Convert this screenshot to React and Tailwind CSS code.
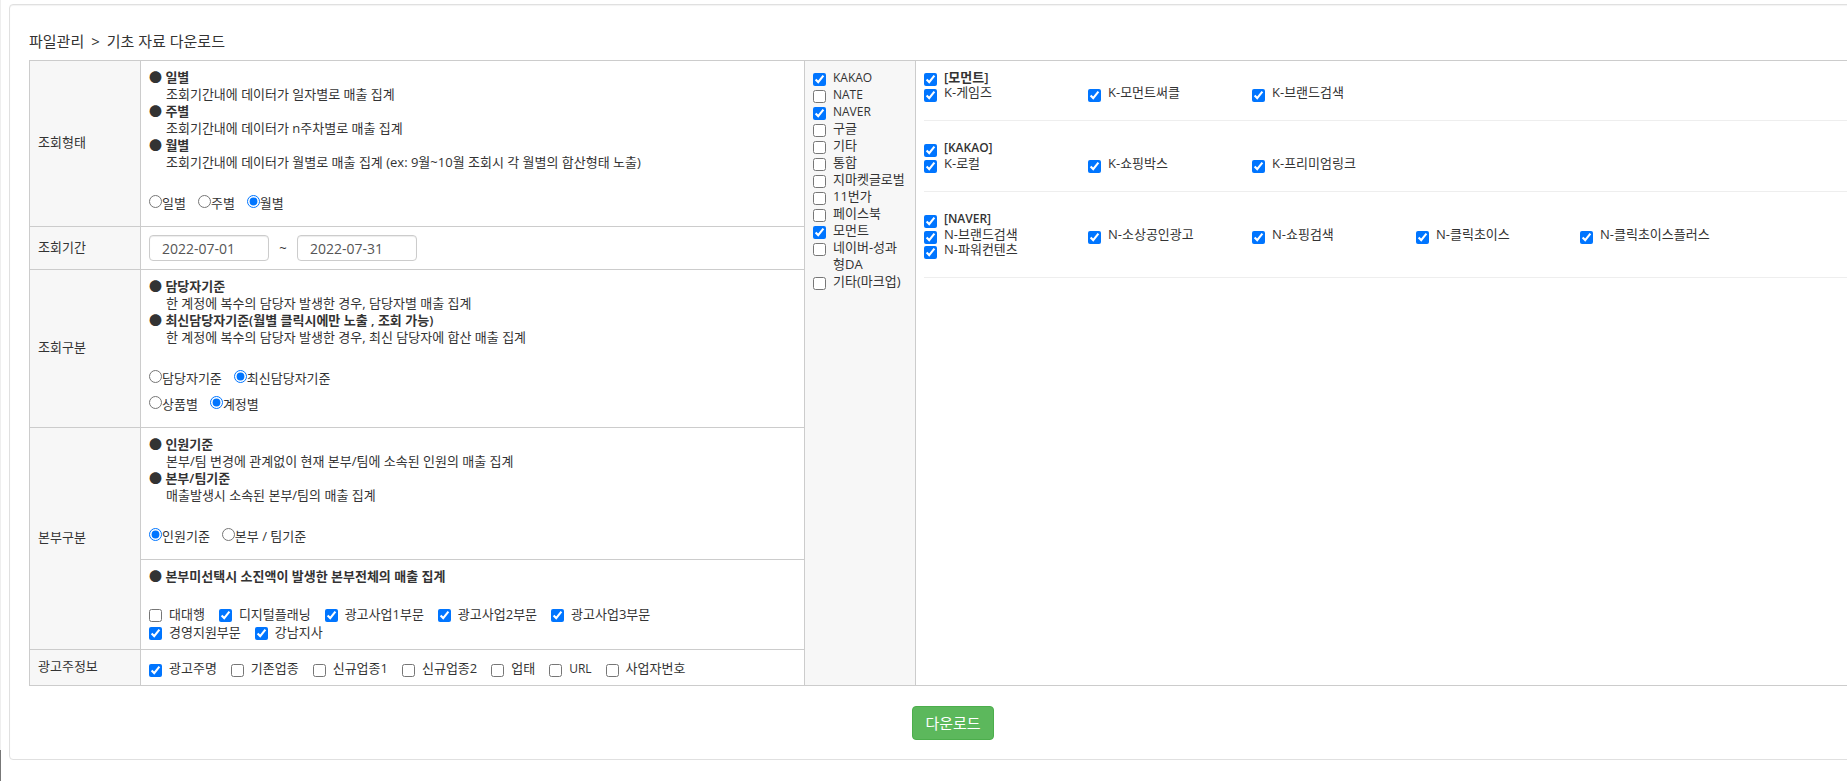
const font = "font-['Open_Sans','Noto_Sans_CJK_KR',sans-serif]";
const label = 'border border-[#ccc] bg-[#f7f7f7] px-2 pb-[2px] text-left align-middle font-normal';
const cell = 'border border-[#ccc] px-2 pt-2 pb-[10px] align-top';

function Notes({ items }) {
  return (
    <dl>
      {items.map(([title, text]) => (
        <div key={title}>
          <dt className="font-semibold">● {title}</dt>
          {text && <dd className="pl-[17px]">{text}</dd>}
        </div>
      ))}
    </dl>
  );
}

function Radios({ name, options, selected }) {
  return (
    <div className="flex h-[26px] items-center gap-3">
      {options.map((option) => (
        <label key={option} className="flex items-start">
          <input type="radio" name={name} defaultChecked={option === selected} className="size-[13px]" />
          {option}
        </label>
      ))}
    </div>
  );
}

function Check({ text, checked = false, className = '', bold = false }) {
  const latin = /^\[?[A-Z]+\]?$/.test(text);
  return (
    <label className={`flex items-start gap-[7px] ${className}`}>
      <input type="checkbox" defaultChecked={checked} className="mt-1 size-[13px] shrink-0" />
      <span className={`${bold ? 'font-semibold' : ''} ${latin ? 'text-xs leading-[inherit]' : ''} break-all`}>{text}</span>
    </label>
  );
}

const media = [
  ['KAKAO', true], ['NATE'], ['NAVER', true], ['구글'], ['기타'], ['통합'], ['지마켓글로벌'],
  ['11번가'], ['페이스북'], ['모먼트', true], ['네이버-성과형DA'], ['기타(마크업)'],
];

const products = [
  ['[모먼트]', ['K-게임즈', 'K-모먼트써클', 'K-브랜드검색']],
  ['[KAKAO]', ['K-로컬', 'K-쇼핑박스', 'K-프리미엄링크']],
  ['[NAVER]', ['N-브랜드검색', 'N-소상공인광고', 'N-쇼핑검색', 'N-클릭초이스', 'N-클릭초이스플러스', 'N-파워컨텐츠']],
];

const divisions = [
  ['대대행'], ['디지털플래닝', true], ['광고사업1부문', true], ['광고사업2부문', true],
  ['광고사업3부문', true], ['경영지원부문', true], ['강남지사', true],
];

const advertiser = [
  ['광고주명', true], ['기존업종'], ['신규업종1'], ['신규업종2'], ['업태'], ['URL'], ['사업자번호'],
];

const dateInput =
  'h-[26px] w-[120px] rounded-[4px] border border-[#ccc] bg-white px-3 text-sm text-[#555] shadow-[inset_0_1px_1px_rgba(0,0,0,0.075)]';

export default function App() {
  return (
    <div className={`${font} flex min-h-screen overflow-x-hidden bg-white text-[13px] leading-[17px] text-[#333]`} lang="ko">
      <div className="flex w-px shrink-0 flex-col bg-[#eee]">
        <div className="mt-auto h-[31px] bg-[#777]" />
      </div>
      <main className="-mr-[50px] mt-1 mb-[21px] ml-2 flex-1 rounded-[4px] border border-[#e0e0e0] px-[19px] pt-[27px] pb-[18px] shadow-[inset_0_1px_1px_rgba(0,0,0,0.05)]">
        <h1 className="mb-[10px] flex gap-[7px] text-[15px] leading-[18px]">
          <span>파일관리</span>
          <span>&gt;</span>
          <span>기초 자료 다운로드</span>
        </h1>
        <table className="w-full table-fixed border-collapse border border-[#ccc]">
          <colgroup>
            <col className="w-[111px]" />
            <col className="w-[664px]" />
            <col className="w-[111px]" />
            <col />
          </colgroup>
          <tbody>
            <tr>
              <th scope="row" className={label}>조회형태</th>
              <td className={cell}>
                <Notes
                  items={[
                    ['일별', '조회기간내에 데이터가 일자별로 매출 집계'],
                    ['주별', '조회기간내에 데이터가 n주차별로 매출 집계'],
                    ['월별', '조회기간내에 데이터가 월별로 매출 집계 (ex: 9월~10월 조회시 각 월별의 합산형태 노출)'],
                  ]}
                />
                <div className="mt-[19px]">
                  <Radios name="period" options={['일별', '주별', '월별']} selected="월별" />
                </div>
              </td>
              <td rowSpan={6} className="border border-[#ccc] bg-[#f7f7f7] p-2 align-top">
                {media.map(([text, checked]) => (
                  <Check key={text} text={text} checked={checked} />
                ))}
              </td>
              <td rowSpan={6} className="border border-[#ccc] p-2 align-top">
                {products.map(([title, items]) => (
                  <section key={title} className="mb-[19px] border-b border-[#eee] pb-5">
                    <Check text={title} checked bold className="h-4 leading-4" />
                    <div className="flex flex-wrap">
                      {items.map((text) => (
                        <Check key={text} text={text} checked className="h-[15px] w-[164px] leading-[15px]" />
                      ))}
                    </div>
                  </section>
                ))}
              </td>
            </tr>
            <tr>
              <th scope="row" className={label}>조회기간</th>
              <td className="border border-[#ccc] p-2">
                <div className="flex items-center">
                  <input type="text" aria-label="시작일" defaultValue="2022-07-01" className={dateInput} />
                  <span className="w-7 text-center">~</span>
                  <input type="text" aria-label="종료일" defaultValue="2022-07-31" className={dateInput} />
                </div>
              </td>
            </tr>
            <tr>
              <th scope="row" className={label}>조회구분</th>
              <td className={cell}>
                <Notes
                  items={[
                    ['담당자기준', '한 계정에 복수의 담당자 발생한 경우, 담당자별 매출 집계'],
                    ['최신담당자기준(월별 클릭시에만 노출 , 조회 가능)', '한 계정에 복수의 담당자 발생한 경우, 최신 담당자에 합산 매출 집계'],
                  ]}
                />
                <div className="mt-[19px]">
                  <Radios name="manager" options={['담당자기준', '최신담당자기준']} selected="최신담당자기준" />
                  <Radios name="unit" options={['상품별', '계정별']} selected="계정별" />
                </div>
              </td>
            </tr>
            <tr>
              <th scope="row" rowSpan={2} className={label}>본부구분</th>
              <td className={cell}>
                <Notes
                  items={[
                    ['인원기준', '본부/팀 변경에 관계없이 현재 본부/팀에 소속된 인원의 매출 집계'],
                    ['본부/팀기준', '매출발생시 소속된 본부/팀의 매출 집계'],
                  ]}
                />
                <div className="mt-[19px]">
                  <Radios name="division" options={['인원기준', '본부 / 팀기준']} selected="인원기준" />
                </div>
              </td>
            </tr>
            <tr>
              <td className="border border-[#ccc] p-2 align-top">
                <Notes items={[['본부미선택시 소진액이 발생한 본부전체의 매출 집계']]} />
                <div className="mt-5 flex max-w-[540px] flex-wrap gap-x-[14px] leading-[18px]">
                  {divisions.map(([text, checked]) => (
                    <Check key={text} text={text} checked={checked} />
                  ))}
                </div>
              </td>
            </tr>
            <tr>
              <th scope="row" className={label}>광고주정보</th>
              <td className="border border-[#ccc] px-2 pt-[10px] pb-2">
                <div className="flex flex-wrap gap-x-[14px]">
                  {advertiser.map(([text, checked]) => (
                    <Check key={text} text={text} checked={checked} />
                  ))}
                </div>
              </td>
            </tr>
          </tbody>
        </table>
        <div className="mt-5 text-center">
          <button type="button" className="h-[34px] rounded-[4px] border border-[#4cae4c] bg-[#5cb85c] px-3 text-[15px] leading-5 text-white">
            다운로드
          </button>
        </div>
      </main>
    </div>
  );
}
